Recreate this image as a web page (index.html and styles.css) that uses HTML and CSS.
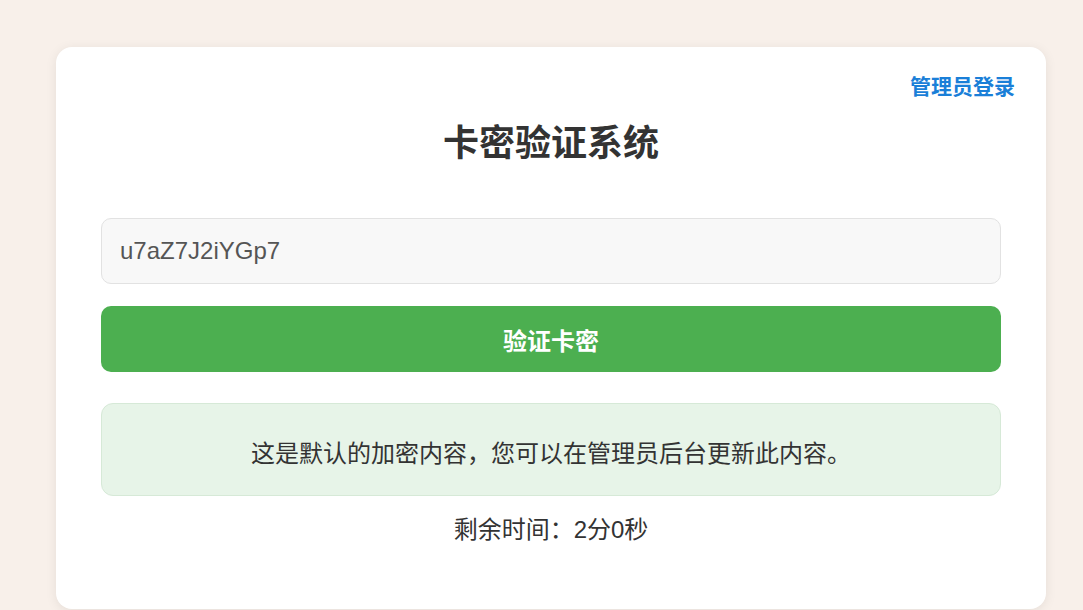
FILE: index.html
```html
<!DOCTYPE html>
<html lang="zh-CN">
  <head>
    <meta charset="utf-8" />
    <meta name="viewport" content="width=device-width, initial-scale=1" />
    <title>卡密验证系统</title>
    <link rel="stylesheet" href="styles.css">
  </head>
  <body>
    <div class="container">
      <div class="top-bar">
        <a class="admin-link" href="#">管理员登录</a>
      </div>
      <h1 class="title">卡密验证系统</h1>
      <input class="card-input" type="text" value="u7aZ7J2iYGp7" />
      <button class="verify-btn">验证卡密</button>
      <div class="message">这是默认的加密内容，您可以在管理员后台更新此内容。</div>
      <p class="timer">剩余时间：2分0秒</p>
    </div>
  </body>
</html>
```

FILE: styles.css
```css
body {
  margin: 0;
  font-family: "Liberation Sans", "Noto Sans CJK SC", sans-serif;
  background: #f8f0ea;
  color: #333;
  overflow: hidden;
  height: 610px;
}

.container {
  width: 990px;
  box-sizing: border-box;
  margin: 47px 0 0 56px;
  padding: 28px 45px 64px;
  background: #fff;
  border-radius: 16px;
  box-shadow: 0 2px 12px rgba(0, 0, 0, 0.08);
  display: flex;
  flex-direction: column;
}

.top-bar {
  display: flex;
  justify-content: flex-end;
  margin-right: -14px;
}

.admin-link {
  font-size: 21px;
  line-height: 24px;
  font-weight: bold;
  color: #1a7fd8;
  text-decoration: none;
}

.title {
  margin: 23px 0 0;
  font-size: 36px;
  line-height: 44px;
  font-weight: bold;
  text-align: center;
  color: #333;
}

.card-input {
  margin-top: 52px;
  height: 66px;
  box-sizing: border-box;
  padding: 0 18px;
  border: 1px solid #e2e2e2;
  border-radius: 10px;
  background: #f8f8f8;
  font-family: inherit;
  font-size: 24px;
  color: #555;
  outline: none;
}

.verify-btn {
  margin-top: 22px;
  height: 66px;
  border: none;
  border-radius: 10px;
  background: #4caf50;
  color: #fff;
  font-family: inherit;
  font-size: 24px;
  font-weight: bold;
}

.message {
  margin-top: 31px;
  height: 93px;
  box-sizing: border-box;
  padding-top: 3px;
  display: flex;
  align-items: center;
  justify-content: center;
  border: 1px solid #d6e9d7;
  border-radius: 12px;
  background: #e7f4e8;
  font-size: 24px;
  color: #333;
}

.timer {
  margin: 19px 0 0;
  font-size: 24px;
  line-height: 30px;
  text-align: center;
  color: #333;
}
```
